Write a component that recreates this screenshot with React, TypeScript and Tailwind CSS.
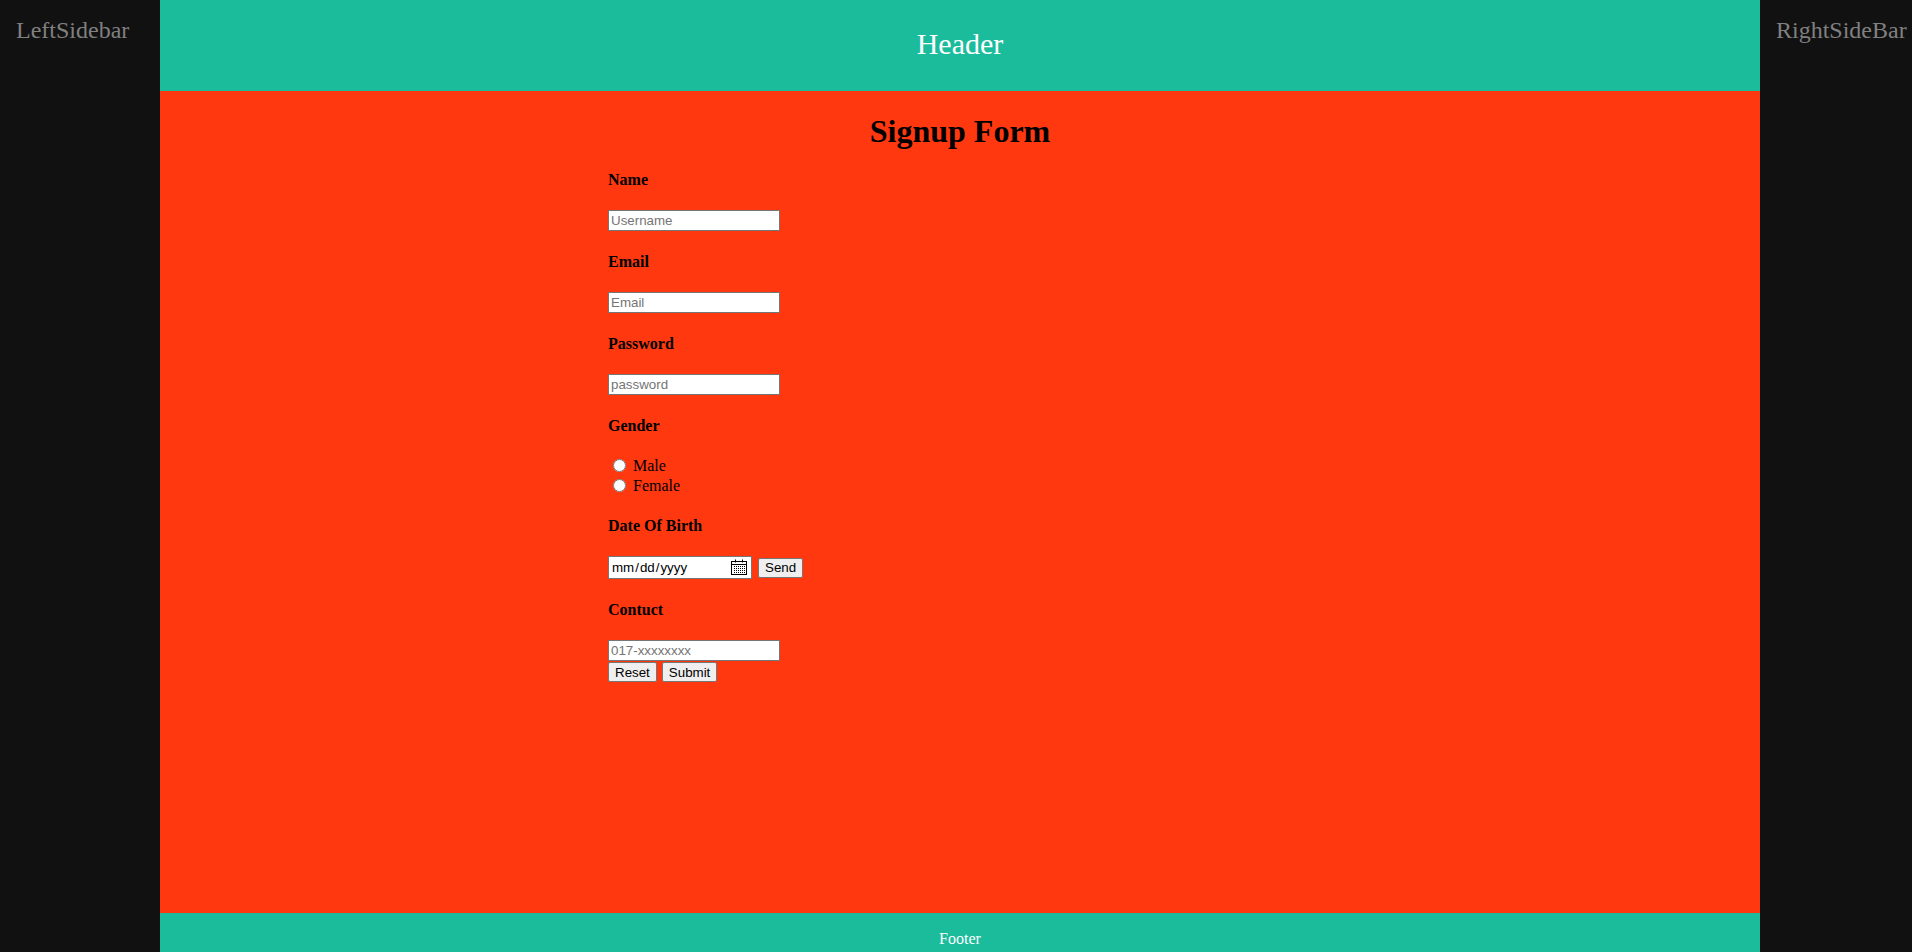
import React from "react";

const serif = "font-['Liberation_Serif','Times_New_Roman',serif]";
const sans = "font-['Liberation_Sans',Arial,sans-serif]";

function Label({ text }: { text: string }) {
  return <h4 className="my-[21.28px] text-[16px] font-bold leading-[normal] text-black">{text}</h4>;
}

function TextInput({ type, placeholder }: { type: string; placeholder: string }) {
  return (
    <input
      type={type}
      placeholder={placeholder}
      className={`${sans} block h-[21.5px] w-[172px] border border-[#767676] bg-white px-[2px] py-[1px] text-[13.33px] leading-[normal] text-black placeholder:text-[#757575]`}
    />
  );
}

function Btn({ text, type = "button" }: { text: string; type?: "button" | "reset" | "submit" }) {
  return (
    <button
      type={type}
      className={`${sans} h-[20px] rounded-[2px] border border-[#767676] bg-[#efefef] px-[6px] text-[13.33px] leading-[normal] text-black`}
    >
      {text}
    </button>
  );
}

function CalendarIcon() {
  return (
    <svg width="16" height="16" viewBox="0 0 16 16" className="pointer-events-none absolute right-[5px] top-[3px]">
      <rect x="0.5" y="2.5" width="15" height="13" fill="none" stroke="#000" />
      <line x1="0.5" y1="5.5" x2="15.5" y2="5.5" stroke="#000" />
      <line x1="4.5" y1="0.5" x2="4.5" y2="3.5" stroke="#000" />
      <line x1="11.5" y1="0.5" x2="11.5" y2="3.5" stroke="#000" />
      {[7, 9, 11, 13].map((y) =>
        [3, 5, 7, 9, 11, 13].map((x) => <rect key={`${x}-${y}`} x={x} y={y} width="1" height="1" fill="#000" />)
      )}
    </svg>
  );
}

export default function App() {
  return (
    <div className={`${serif} flex h-screen w-full overflow-hidden`}>
      {/* left sidebar */}
      <aside className="w-[160px] shrink-0 bg-[#111111] px-4 pt-[17px] text-[24px] leading-[normal] text-[#808080]">
        LeftSidebar
      </aside>

      <div className="flex min-w-0 flex-1 flex-col">
        <header className="h-[91px] shrink-0 bg-[#1abc9c] pt-[27px] text-center text-[30px] leading-[normal] text-white">
          Header
        </header>

        <main className="flex-1 overflow-hidden bg-[#ff3810] pt-px">
          <h1 className="mb-[20px] mt-[22.3px] text-center text-[32px] font-bold leading-[35px] text-black">Signup Form</h1>
          <form className="mx-auto w-[704px]" onSubmit={(e) => e.preventDefault()}>
            <Label text="Name" />
            <TextInput type="text" placeholder="Username" />

            <Label text="Email" />
            <TextInput type="email" placeholder="Email" />

            <Label text="Password" />
            <TextInput type="password" placeholder="password" />

            <Label text="Gender" />
            <div className="text-[16px] text-black">
              <label className="flex h-[20px] items-center">
                <input type="radio" name="gender" className="ml-[5px] mr-[7px] h-[13px] w-[13px]" />
                Male
              </label>
              <label className="flex h-[20px] items-center">
                <input type="radio" name="gender" className="ml-[5px] mr-[7px] h-[13px] w-[13px]" />
                Female
              </label>
            </div>

            <Label text="Date Of Birth" />
            <div className="mb-[3px] flex items-center gap-[6px]">
              <div className="relative">
                <input
                  type="date"
                  className={`${sans} block h-[23px] w-[144px] border border-[#767676] bg-white px-[2px] text-[13.33px] leading-[normal] text-black [&::-webkit-calendar-picker-indicator]:opacity-0`}
                />
                <CalendarIcon />
              </div>
              <Btn text="Send" />
            </div>

            <Label text="Contuct" />
            <TextInput type="tel" placeholder="017-xxxxxxxx" />
            <div className="mt-[1px] flex gap-[5px]">
              <Btn text="Reset" type="reset" />
              <Btn text="Submit" type="submit" />
            </div>
          </form>
        </main>

        <footer className="h-[39px] shrink-0 bg-[#1abc9c] pt-[17px] text-center text-[16px] leading-[normal] text-white">
          Footer
        </footer>
      </div>

      {/* right sidebar */}
      <aside className="w-[152px] shrink-0 overflow-hidden whitespace-nowrap bg-[#111111] px-4 pt-[17px] text-[24px] leading-[normal] text-[#808080]">
        RightSideBar
      </aside>
    </div>
  );
}
